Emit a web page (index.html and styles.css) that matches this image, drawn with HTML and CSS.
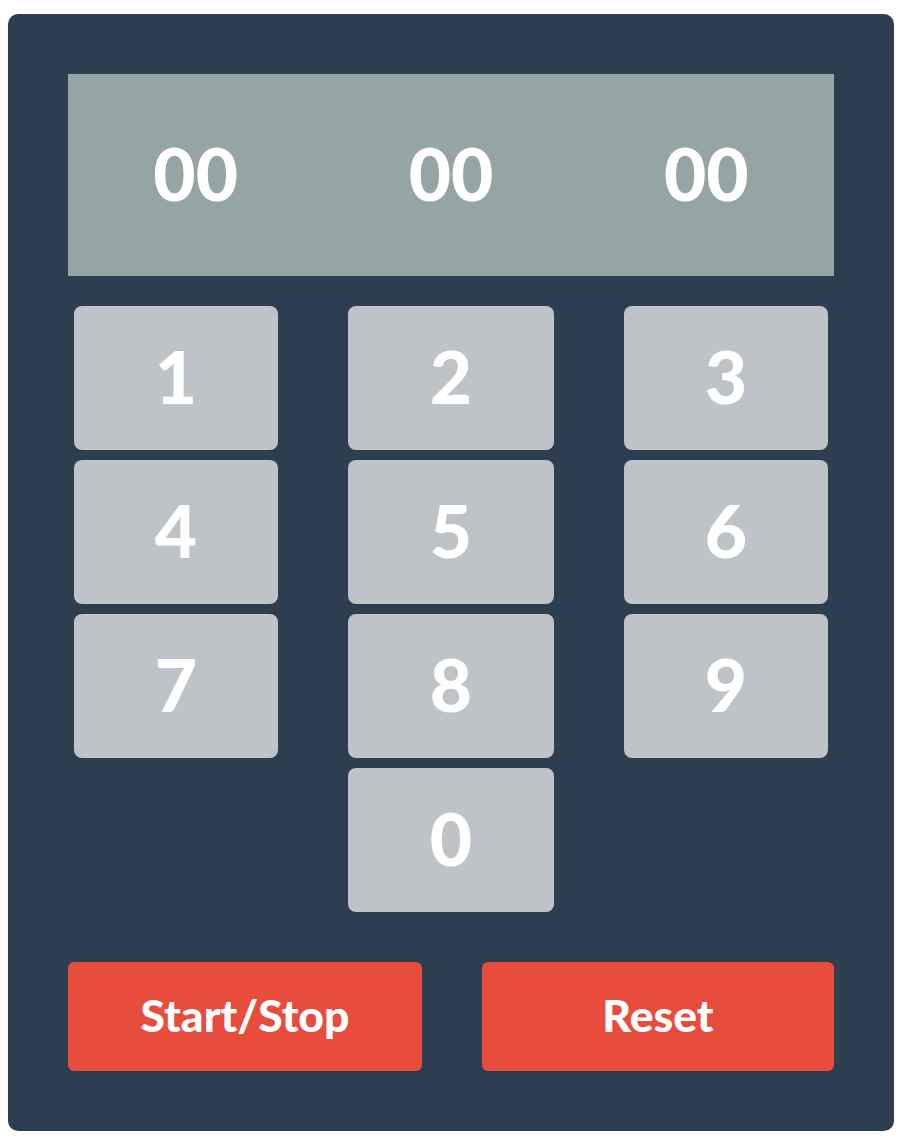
FILE: index.html
```html
<!DOCTYPE html>
<html>
<head>
<meta charset="utf-8">
<link rel="stylesheet" href="styles.css">
</head>
<body>
<div class="timer">
  <div class="display">
    <span class="seg">00</span>
    <span class="seg">00</span>
    <span class="seg">00</span>
  </div>
  <div class="keypad">
    <button class="key">1</button>
    <button class="key">2</button>
    <button class="key">3</button>
    <button class="key">4</button>
    <button class="key">5</button>
    <button class="key">6</button>
    <button class="key">7</button>
    <button class="key">8</button>
    <button class="key">9</button>
    <button class="key key-zero">0</button>
  </div>
  <div class="controls">
    <button class="action">Start/Stop</button>
    <button class="action">Reset</button>
  </div>
</div>
</body>
</html>
```
FILE: styles.css
```css
html, body {
  margin: 0;
  padding: 0;
  background: #ffffff;
}
body {
  padding: 14px 12px 0 8px;
  font-family: Lato, "Liberation Sans", sans-serif;
}
.timer {
  width: 886px;
  box-sizing: border-box;
  background: #2c3e50;
  border-radius: 10px;
  padding: 60px 60px 60px 60px;
}
.display {
  height: 202px;
  background: #95a5a6;
  display: grid;
  grid-template-columns: 1fr 1fr 1fr;
  align-items: center;
  justify-items: center;
}
.seg {
  color: #ffffff;
  font-weight: 900;
  font-size: 73px;
  line-height: 1;
  padding-bottom: 4px;
}
.keypad {
  margin-top: 30px;
  padding: 0 6px;
  display: grid;
  grid-template-columns: 204px 206px 204px;
  grid-auto-rows: 144px;
  justify-content: space-between;
  row-gap: 10px;
}
.key {
  border: none;
  margin: 0;
  padding: 0 0 4px 0;
  background: #bdc3c7;
  border-radius: 8px;
  color: #ffffff;
  font-family: Lato, "Liberation Sans", sans-serif;
  font-weight: 900;
  font-size: 73px;
  line-height: 1;
}
.key-zero {
  grid-column: 2;
}
.controls {
  margin-top: 50px;
  display: grid;
  grid-template-columns: 354px 352px;
  justify-content: space-between;
}
.action {
  height: 109px;
  border: none;
  margin: 0;
  padding: 0 0 2px 0;
  background: #e74c3c;
  border-radius: 6px;
  color: #ffffff;
  font-family: Lato, "Liberation Sans", sans-serif;
  font-weight: 900;
  font-size: 44.5px;
  line-height: 1;
}
```
